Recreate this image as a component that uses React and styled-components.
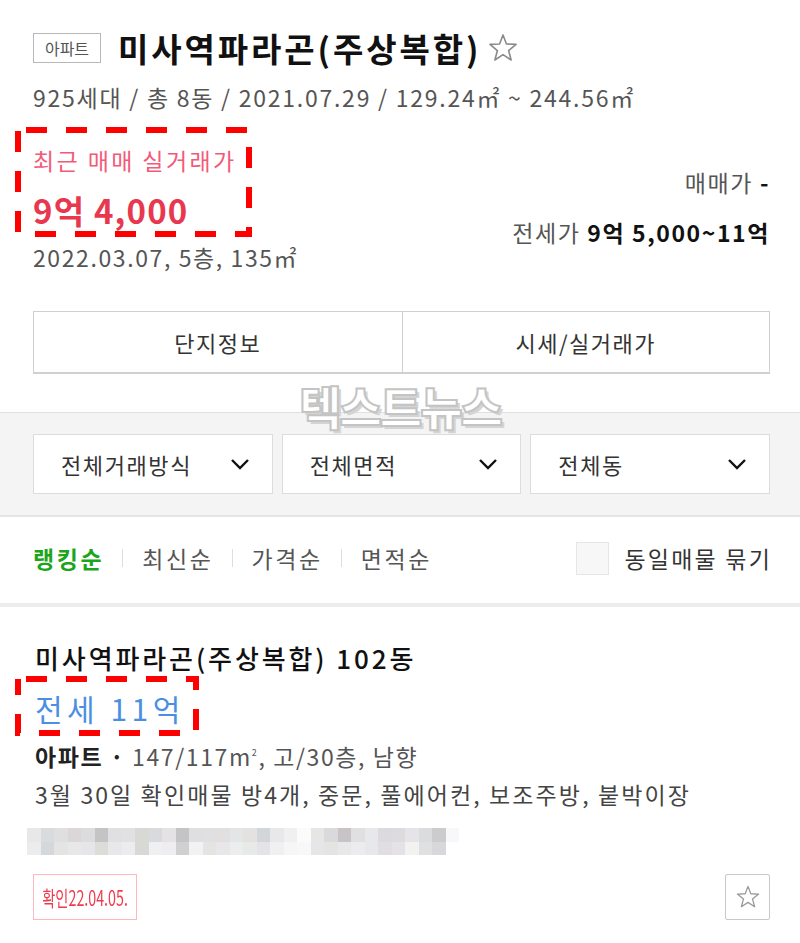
import React from "react";
import styled, { createGlobalStyle } from "styled-components";

const Global = createGlobalStyle`
  html, body { margin: 0; padding: 0; background: #fff; }
  body { font-family: "Noto Sans CJK KR", "Noto Sans", sans-serif; color: #222; }
  * { box-sizing: border-box; }
`;

const Page = styled.div`
  position: relative;
  width: 800px;
  height: 943px;
  overflow: hidden;
  background: #fff;
`;

const Header = styled.section`
  padding: 28px 30px 0 33px;
`;

const TitleRow = styled.div`
  display: flex;
  align-items: center;
  height: 40px;
`;

const Badge = styled.span`
  display: inline-flex;
  align-items: center;
  justify-content: center;
  width: 68px;
  height: 30px;
  border: 1px solid #b8b8b8;
  font-size: 16px;
  color: #555;
  line-height: 1;
  margin-right: 17px;
`;

const Title = styled.h1`
  margin: 0;
  font-size: 33px;
  font-weight: 700;
  color: #111;
  line-height: 40px;
  letter-spacing: 2.9px;
`;

const StarIcon = styled.svg`
  margin-left: ${(p) => p.$ml || 0}px;
  width: ${(p) => p.$size}px;
  height: ${(p) => p.$size}px;
  display: block;
`;

const SubInfo = styled.div`
  margin-top: 14px;
  font-size: 23px;
  line-height: 30px;
  color: #555;
  letter-spacing: 1.75px;
`;

const PriceArea = styled.div`
  display: flex;
  justify-content: space-between;
  margin-top: 33px;
`;

const LeftPrice = styled.div`
  position: relative;
  display: flex;
  flex-direction: column;
`;

const RecentLabel = styled.div`
  font-size: 23px;
  line-height: 30px;
  color: #f25a7a;
  letter-spacing: 2.4px;
`;

const RecentPrice = styled.div`
  font-size: 33px;
  line-height: 40px;
  font-weight: 700;
  color: #e8384f;
  margin-top: 15px;
  letter-spacing: 1.2px;
`;

const RecentMeta = styled.div`
  font-size: 23px;
  line-height: 30px;
  color: #555;
  margin-top: 12px;
  letter-spacing: 1.6px;
`;

const RightPrice = styled.div`
  display: flex;
  flex-direction: column;
  align-items: flex-end;
  padding-top: 22px;
`;

const PriceLine = styled.div`
  font-size: 23px;
  line-height: 30px;
  color: #555;
  margin-bottom: ${(p) => p.$gap || 0}px;
  letter-spacing: 1.6px;
  b { color: #111; font-weight: 700; }
`;

const Annot = styled.svg`
  position: absolute;
  pointer-events: none;
  overflow: visible;
`;

const ButtonRow = styled.div`
  display: grid;
  grid-template-columns: 1fr 1fr;
  margin-top: 39px;
  border: 1px solid #d0d0d0;
  border-bottom-width: 2px;
  height: 63px;
`;

const TabButton = styled.div`
  display: flex;
  align-items: center;
  justify-content: center;
  font-size: 22px;
  color: #333;
  letter-spacing: 1.5px;
  & + & { border-left: 1px solid #d0d0d0; }
`;

const FilterBand = styled.section`
  margin-top: 38px;
  background: #f4f4f4;
  border-top: 1px solid #e0e0e0;
  border-bottom: 2px solid #e4e4e4;
  padding: 21px 30px 21px 33px;
  display: grid;
  grid-template-columns: repeat(3, 1fr);
  gap: 9px;
`;

const Dropdown = styled.div`
  height: 60px;
  background: #fff;
  border: 1px solid #dcdcdc;
  display: flex;
  align-items: center;
  justify-content: space-between;
  padding: 0 22px 0 27px;
  font-size: 22px;
  color: #333;
  letter-spacing: 1.6px;
`;

const Chevron = styled.svg`
  width: 20px;
  height: 12px;
`;

const SortRow = styled.div`
  display: flex;
  align-items: center;
  justify-content: space-between;
  height: 90px;
  padding: 0 28px 4px 33px;
  border-bottom: 4px solid #ececec;
`;

const SortList = styled.div`
  display: flex;
  align-items: center;
`;

const SortItem = styled.span`
  font-size: 23px;
  line-height: 30px;
  color: ${(p) => (p.$active ? "#1aa51a" : "#555")};
  font-weight: ${(p) => (p.$active ? 700 : 400)};
  letter-spacing: 2.6px;
`;

const Sep = styled.span`
  width: 1px;
  height: 18px;
  background: #dedede;
  margin: 0 19px 0 18px;
`;

const CheckWrap = styled.label`
  display: flex;
  align-items: center;
  font-size: 23px;
  color: #333;
  letter-spacing: 2.2px;
`;

const CheckBox = styled.span`
  width: 33px;
  height: 33px;
  border: 1px solid #e6e6e6;
  background: #f7f7f7;
  margin-right: 15px;
`;

const Listing = styled.section`
  position: relative;
  padding: 35px 30px 0 35px;
`;

const ListTitle = styled.div`
  font-size: 26px;
  line-height: 32px;
  font-weight: 500;
  color: #111;
  letter-spacing: 2.9px;
`;

const ListPrice = styled.div`
  position: relative;
  font-size: 30px;
  line-height: 40px;
  color: #4a8fe4;
  margin-top: 14px;
  letter-spacing: 4.5px;
`;

const ListSpec = styled.div`
  font-size: 23px;
  line-height: 30px;
  color: #555;
  margin-top: 10px;
  letter-spacing: 1.6px;
  b { color: #222; font-weight: 700; }
  sup { font-size: 9px; vertical-align: 10px; }
`;

const ListDesc = styled.div`
  font-size: 23px;
  line-height: 30px;
  color: #444;
  margin-top: 8px;
  letter-spacing: 2.1px;
`;

const Blur = styled.div`
  display: grid;
  grid-template-columns: repeat(32, 13.5px);
  grid-auto-rows: 13.5px;
  margin: 19px 0 0 -8px;
  filter: blur(0.6px);
`;

const Cell = styled.span`
  display: block;
`;

const BottomRow = styled.div`
  display: flex;
  justify-content: space-between;
  align-items: center;
  margin: 19px 0 0 -2px;
`;

const Tag = styled.span`
  display: inline-flex;
  align-items: center;
  justify-content: center;
  height: 46px;
  width: 104px;
  white-space: nowrap;
  border: 1px solid #ffb8bf;
  color: #f03a4c;
  overflow: hidden;
`;

const TagText = styled.span`
  display: inline-block;
  font-size: 21px;
  letter-spacing: 0;
  transform: scaleX(0.68);
  transform-origin: center;
  margin: 0 -22px;
`;

const StarButton = styled.div`
  width: 45px;
  height: 46px;
  border: 1px solid #c8c8c8;
  border-radius: 2px;
  display: flex;
  align-items: center;
  justify-content: center;
`;

const Watermark = styled.div`
  position: absolute;
  left: 0;
  right: 0;
  top: 372px;
  text-align: center;
  font-size: 46px;
  font-weight: 900;
  letter-spacing: -2px;
  color: #fff;
  -webkit-text-stroke: 2px #c4c4c4;
  text-shadow: 3px 3px 0 #d4d4d4;
  pointer-events: none;
`;

const row1 = ["e8e8e8","d8dcde","dfdfdf","dbd7d8","dcdcdf","c4c4c4","e0e0e2","e2e0e3","d8d8d4","d8dade","e4e2e4","c4c4c6","dfdfe1","e0dfe1","e2dfe1","e3e6e6","e4e2e0","d2d6d8","e8e8ea","f0f0f2","fbfbfb","e6e6e4","dadadc","c8c4c6","e0e0e2","e6e8ea","dcdade","dcdcde","e6e4e8","dadcde","ccccce","f8f8fa"];
const row2 = ["ececec","d4d8da","e4e4e4","e8e8ea","e6e6e8","dcdcd8","e8e8ea","ececee","d8d8d6","eef0f2","eeeef0","d0d0d0","f2f2f4","e4e4e2","e8e6e8","eceeee","e8eaea","e4e4e6","f0f0f2","f6f6f6","f8f8f8","e6e6e8","e4e4e2","e8e8ea","ececee","e8e8ea","e0dee0","e4e2e6","f2f2f0","e0e0e2","d8d8da","ffffff"];

const Star = ({ size, color, ml }) => (
  <StarIcon $size={size} $ml={ml} viewBox="0 0 24 24">
    <polygon
      points="12,2.2 14.6,9 21.8,9.3 16.2,13.9 18.1,21 12,17 5.9,21 7.8,13.9 2.2,9.3 9.4,9"
      fill="none"
      stroke={color}
      strokeWidth="1.2"
      strokeLinejoin="round"
    />
  </StarIcon>
);

const DashBox = ({ left, top, width, height }) => (
  <Annot
    style={{ left, top, width, height }}
    viewBox={`0 0 ${width} ${height}`}
  >
    <rect
      x="3"
      y="3"
      width={width - 6}
      height={height - 6}
      fill="none"
      stroke="#ff0000"
      strokeWidth="6"
      strokeDasharray="21 19"
      strokeDashoffset="-8"
    />
  </Annot>
);

const Down = () => (
  <Chevron viewBox="0 0 20 12">
    <polyline points="2,2 10,10 18,2" fill="none" stroke="#111" strokeWidth="2.4" />
  </Chevron>
);

export default function App() {
  return (
    <Page>
      <Global />
      <Header>
        <TitleRow>
          <Badge>아파트</Badge>
          <Title>미사역파라곤(주상복합)</Title>
          <Star size={32} color="#8a8a8a" ml={6} />
        </TitleRow>
        <SubInfo>925세대 / 총 8동 / 2021.07.29 / 129.24㎡ ~ 244.56㎡</SubInfo>
        <PriceArea>
          <LeftPrice>
            <RecentLabel>최근 매매 실거래가</RecentLabel>
            <RecentPrice>9억 4,000</RecentPrice>
            <RecentMeta>2022.03.07, 5층, 135㎡</RecentMeta>
            <DashBox left={-18} top={-18} width={237} height={110} />
          </LeftPrice>
          <RightPrice>
            <PriceLine $gap={20}>매매가 <b>-</b></PriceLine>
            <PriceLine>전세가 <b>9억 5,000~11억</b></PriceLine>
          </RightPrice>
        </PriceArea>
        <ButtonRow>
          <TabButton>단지정보</TabButton>
          <TabButton>시세/실거래가</TabButton>
        </ButtonRow>
      </Header>
      <FilterBand>
        <Dropdown>전체거래방식<Down /></Dropdown>
        <Dropdown>전체면적<Down /></Dropdown>
        <Dropdown>전체동<Down /></Dropdown>
      </FilterBand>
      <SortRow>
        <SortList>
          <SortItem $active>랭킹순</SortItem>
          <Sep />
          <SortItem>최신순</SortItem>
          <Sep />
          <SortItem>가격순</SortItem>
          <Sep />
          <SortItem>면적순</SortItem>
        </SortList>
        <CheckWrap>
          <CheckBox />
          동일매물 묶기
        </CheckWrap>
      </SortRow>
      <Listing>
        <ListTitle>미사역파라곤(주상복합) 102동</ListTitle>
        <ListPrice>
          전세 11억
          <DashBox left={-20} top={-12} width={184} height={60} />
        </ListPrice>
        <ListSpec><b>아파트 ·</b> 147/117m<sup>2</sup>, 고/30층, 남향</ListSpec>
        <ListDesc>3월 30일 확인매물 방4개, 중문, 풀에어컨, 보조주방, 붙박이장</ListDesc>
        <Blur>
          {row1.concat(row2).map((c, i) => (
            <Cell key={i} style={{ background: `#${c}` }} />
          ))}
        </Blur>
        <BottomRow>
          <Tag><TagText>확인22.04.05.</TagText></Tag>
          <StarButton><Star size={26} color="#9a9a9a" /></StarButton>
        </BottomRow>
      </Listing>
      <Watermark>텍스트뉴스</Watermark>
    </Page>
  );
}
